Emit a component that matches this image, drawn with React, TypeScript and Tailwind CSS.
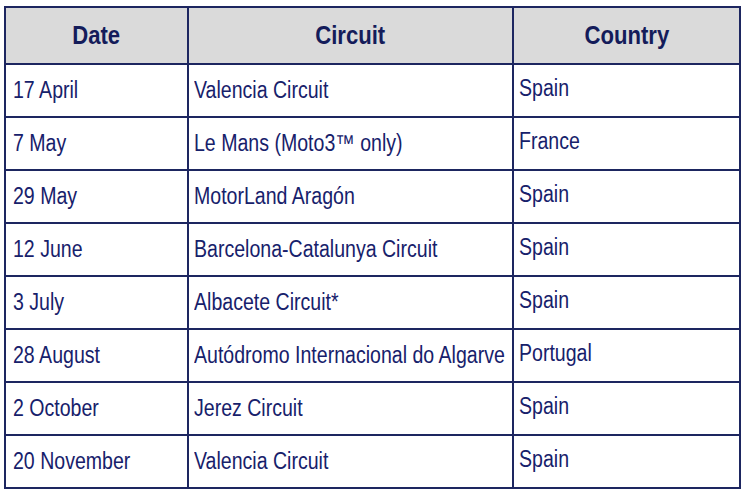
const rows: [string, string, string][] = [
    ['17 April', 'Valencia Circuit', 'Spain'],
    ['7 May', 'Le Mans (Moto3\u2122 only)', 'France'],
    ['29 May', 'MotorLand Aragón', 'Spain'],
    ['12 June', 'Barcelona-Catalunya Circuit', 'Spain'],
    ['3 July', 'Albacete Circuit*', 'Spain'],
    ['28 August', 'Autódromo Internacional do Algarve', 'Portugal'],
    ['2 October', 'Jerez Circuit', 'Spain'],
    ['20 November', 'Valencia Circuit', 'Spain'],
];

// the source uses a narrow face, so the text is squeezed horizontally
function Narrow({ children, center }: { children: React.ReactNode; center?: boolean }) {
    return (
        <span className={center ? 'inline-block whitespace-nowrap origin-center scale-x-[0.85]' : 'inline-block whitespace-nowrap origin-left scale-x-[0.85]'}>
            {children}
        </span>
    );
}

export default function App() {
    return (
        <div className="w-[745px] h-[496px] bg-white pt-[6px] pl-[4px]" style={{ fontFamily: '"Liberation Sans", Arial, sans-serif' }}>
            <table className="w-[735px] table-fixed border-collapse text-[#17216b]">
                <thead>
                    <tr className="h-[57px] bg-[#dadada]">
                        <th className="w-[183px] border-2 border-[#1d2660] text-[26px] font-bold text-[#141c5a]"><Narrow center>Date</Narrow></th>
                        <th className="w-[325px] border-2 border-[#1d2660] text-[26px] font-bold text-[#141c5a]"><Narrow center>Circuit</Narrow></th>
                        <th className="w-[227px] border-2 border-[#1d2660] text-[26px] font-bold text-[#141c5a]"><Narrow center>Country</Narrow></th>
                    </tr>
                </thead>
                <tbody>
                    {rows.map(([date, circuit, country]) => (
                        <tr key={date} className="h-[53px]">
                            <td className="border-2 border-[#1d2660] pl-[7px] pr-0 text-[23px]"><Narrow>{date}</Narrow></td>
                            <td className="border-2 border-[#1d2660] pl-[5px] pr-0 text-[23px]"><Narrow>{circuit}</Narrow></td>
                            <td className="border-2 border-[#1d2660] pl-[5px] pr-0 pb-[5px] text-[23px]"><Narrow>{country}</Narrow></td>
                        </tr>
                    ))}
                </tbody>
            </table>
        </div>
    );
}
